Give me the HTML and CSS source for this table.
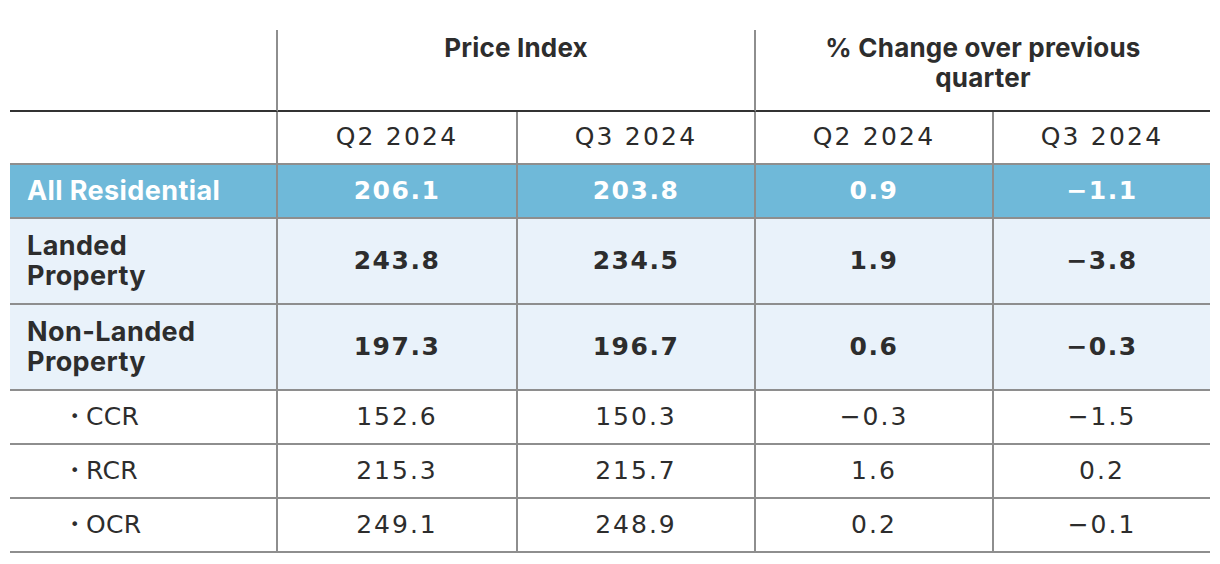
FILE: index.html
```html
<!DOCTYPE html>
<html lang="en">
<head>
<meta charset="utf-8">
<title>Price Index</title>
<link rel="stylesheet" href="styles.css">
</head>
<body>
<table class="pi-table">
  <colgroup>
    <col class="c1"><col class="c2"><col class="c3"><col class="c4"><col class="c5">
  </colgroup>
  <thead>
    <tr class="group-row">
      <th class="lab"></th>
      <th colspan="2" class="grp">Price Index</th>
      <th colspan="2" class="grp last">% Change over previous quarter</th>
    </tr>
    <tr class="period-row">
      <th class="lab"></th>
      <th class="num">Q2 2024</th>
      <th class="num">Q3 2024</th>
      <th class="num">Q2 2024</th>
      <th class="num last">Q3 2024</th>
    </tr>
  </thead>
  <tbody>
    <tr class="row-all">
      <td class="lab">All Residential</td>
      <td class="num">206.1</td>
      <td class="num">203.8</td>
      <td class="num">0.9</td>
      <td class="num last">−1.1</td>
    </tr>
    <tr class="row-main">
      <td class="lab">Landed<br>Property</td>
      <td class="num">243.8</td>
      <td class="num">234.5</td>
      <td class="num">1.9</td>
      <td class="num last">−3.8</td>
    </tr>
    <tr class="row-main">
      <td class="lab">Non-Landed<br>Property</td>
      <td class="num">197.3</td>
      <td class="num">196.7</td>
      <td class="num">0.6</td>
      <td class="num last">−0.3</td>
    </tr>
    <tr class="row-sub">
      <td class="lab"><span class="dot">•</span>CCR</td>
      <td class="num">152.6</td>
      <td class="num">150.3</td>
      <td class="num">−0.3</td>
      <td class="num last">−1.5</td>
    </tr>
    <tr class="row-sub">
      <td class="lab"><span class="dot">•</span>RCR</td>
      <td class="num">215.3</td>
      <td class="num">215.7</td>
      <td class="num">1.6</td>
      <td class="num last">0.2</td>
    </tr>
    <tr class="row-sub">
      <td class="lab"><span class="dot">•</span>OCR</td>
      <td class="num">249.1</td>
      <td class="num">248.9</td>
      <td class="num">0.2</td>
      <td class="num last">−0.1</td>
    </tr>
  </tbody>
</table>
</body>
</html>
```

FILE: styles.css
```css
html, body {
  margin: 0;
  padding: 0;
  background: #ffffff;
}

body {
  padding: 30px 10px 0 10px;
  font-family: Inter, "Noto Sans", sans-serif;
  color: #2d2d2d;
}

.pi-table {
  width: 1200px;
  table-layout: fixed;
  border-collapse: separate;
  border-spacing: 0;
}

.c1 { width: 268px; }
.c2 { width: 240px; }
.c3 { width: 238px; }
.c4 { width: 238px; }
.c5 { width: 216px; }

.pi-table th,
.pi-table td {
  padding: 0;
  border-right: 2px solid #8e8e8e;
  border-bottom: 2px solid #8e8e8e;
  font-size: 26px;
  line-height: 30px;
}

.pi-table .last {
  border-right: none;
}

.group-row th {
  border-bottom: 2px solid #333333;
  vertical-align: top;
  padding: 3px 40px 17px;
  height: 60px;
  font-weight: 700;
  text-align: center;
  letter-spacing: 0.2px;
}

.group-row th.lab {
  padding: 0;
}

.period-row th {
  font-family: "DejaVu Sans", sans-serif;
  font-weight: 400;
  font-size: 25px;
  letter-spacing: 2.2px;
  padding: 10px 0 11px;
  text-align: center;
  color: #2b2b2b;
}

.num {
  text-align: center;
  font-family: "DejaVu Sans", sans-serif;
  letter-spacing: 1.5px;
}

.lab {
  text-align: left;
  padding-left: 17px !important;
}

.row-all td,
.row-main td {
  font-weight: 700;
}

.row-all td.lab,
.row-main td.lab {
  font-size: 27px;
  letter-spacing: 0.4px;
}

.row-all td {
  background: #6fb9d9;
  color: #ffffff;
  padding: 11px 0;
}

.row-all td.num {
  font-size: 25px;
}

.row-main td {
  background: #e9f2fa;
  padding: 12px 0;
}

.row-main td.num {
  font-size: 25px;
}

.row-sub td {
  padding: 11px 0;
  font-weight: 400;
}

.row-sub td.num {
  font-size: 25px;
  letter-spacing: 2px;
}

.row-sub td.lab {
  padding-left: 60px !important;
  font-family: "DejaVu Sans", sans-serif;
  font-size: 25px;
  letter-spacing: 0.3px;
}

.dot {
  display: inline-block;
  font-size: 16px;
  width: 16px;
  vertical-align: 3px;
}
```
